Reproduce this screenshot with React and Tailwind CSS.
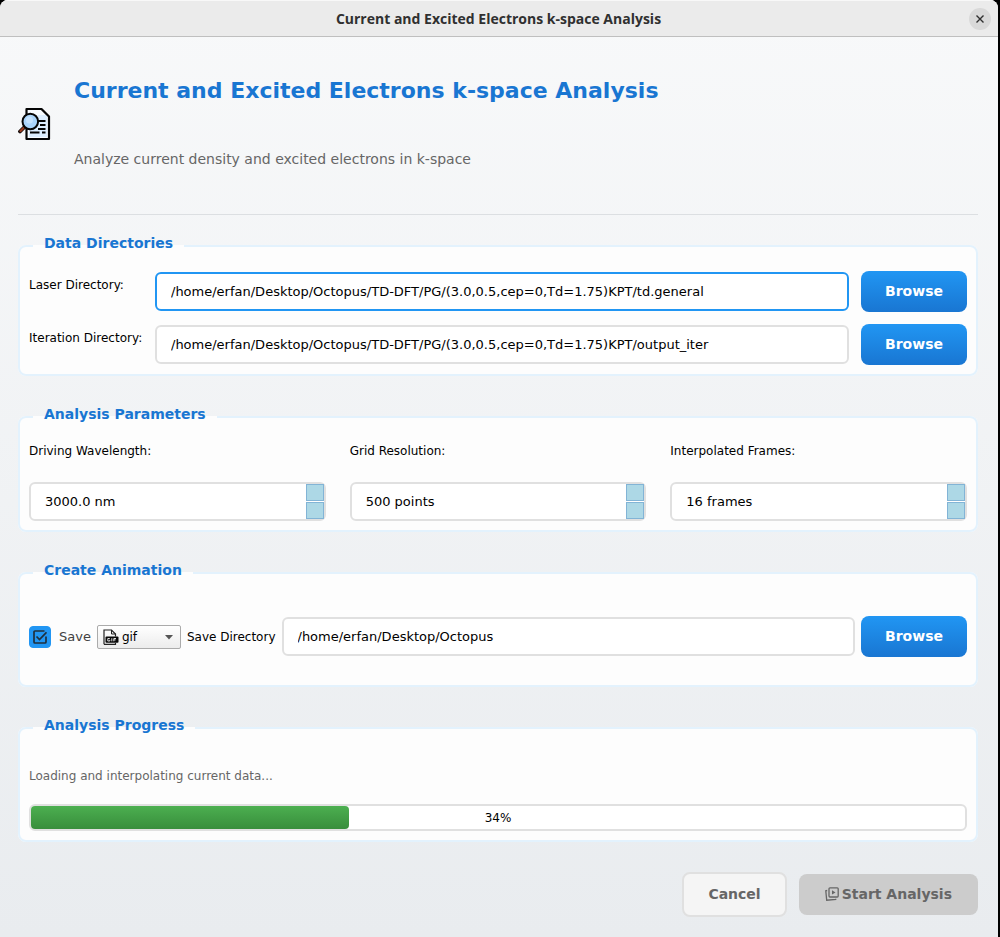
import { useState } from "react";

function DocumentSearchIcon() {
  return (
    <svg width="34" height="34" viewBox="0 0 34 34" fill="none" className="shrink-0" aria-hidden="true">
      <path d="M8.500 2H23.500L31 9.500V32H8.500Z" fill="#f7fbff" />
      <path d="M20 8H29V30H11V17Z" fill="#dceeff" />
      <path d="M8.500 2H23.500L31 9.500V32H8.500Z" stroke="#050505" strokeWidth="2.200" strokeLinejoin="round" />
      <path d="M20 14H27.500M22 18H27.500M20 22H27.500M12 25.500H21.500M24 25.500H27.500" stroke="#050505" strokeWidth="2" />
      <path d="M7 19.500L2 24.500" stroke="#17100e" strokeWidth="3.800" strokeLinecap="round" />
      <path d="M5.500 21L2.500 24" stroke="#9a3a1c" strokeWidth="2.200" strokeLinecap="round" />
      <circle cx="12.300" cy="14.500" r="7.800" fill="#a9d4fb" stroke="#050505" strokeWidth="2" />
      <circle cx="11.500" cy="13" r="3.500" fill="#c4e2fd" />
    </svg>
  );
}

function GifFileIcon() {
  return (
    <svg width="16" height="16" viewBox="0 0 16 16" fill="none" className="pointer-events-none absolute left-1.5 top-1" aria-hidden="true">
      <path d="M1 15.300V1H8.500L12.500 5V7.500M1 15.300H12.500V14" stroke="#222" strokeWidth="1.200" />
      <path d="M8.500 1V5H12.500" stroke="#222" />
      <rect x="2.500" y="7.500" width="13" height="6.300" rx="1" fill="#080808" />
      <path d="M6.800 9.500H4.800V12H6.800V10.800M8.800 9.200V12.300M10.800 12.300V9.500H13M10.800 10.900H12.600" stroke="#f5f5f5" strokeWidth=".9" />
    </svg>
  );
}

function PlayStackIcon() {
  return (
    <svg width="14" height="14" viewBox="0 0 14 14" fill="none" stroke="#666" strokeWidth="1.300" aria-hidden="true">
      <rect x="4" y=".8" width="9.200" height="9.200" rx="1" />
      <path d="M7 3.300L10.500 5.400L7 7.500Z" fill="#666" stroke="none" />
      <path d="M2.200 3.500L.8 3.700L1.700 13.200L10.700 12.500V11.700" />
    </svg>
  );
}

function Group({ title, className, children }) {
  return (
    <fieldset className={`min-w-0 rounded-lg border-2 border-[#e3f2fd] bg-[#fdfdfd] px-[9px] pb-[9px] ${className}`}>
      <legend className="ml-1 px-[11px] pb-1.5 text-sm leading-4 font-bold text-[#1976d2]">{title}</legend>
      {children}
    </fieldset>
  );
}

const FIELD = "h-[39px] w-full min-w-0 rounded-md border-2 bg-white px-3.5 text-[13px] text-black outline-none focus:border-[#2196f3]";

function BrowseButton() {
  return (
    <button type="button" className="h-[41px] rounded-lg bg-linear-to-b from-[#2196f3] to-[#1976d2] px-6 pb-0.5 text-sm font-bold text-white">
      Browse
    </button>
  );
}

function DirectoryRow({ id, label, value, active }) {
  return (
    <div className="flex items-center gap-3">
      <label htmlFor={id} className="mt-1.5 w-[114px] shrink-0 self-start text-xs leading-4 whitespace-nowrap">
        {label}
      </label>
      <input id={id} defaultValue={value} className={`${FIELD} ${active ? "border-[#2196f3]" : "border-[#e0e0e0]"}`} />
      <BrowseButton />
    </div>
  );
}

function SpinBox({ id, label, initial, step, decimals, unit }) {
  const [value, setValue] = useState(initial);
  const stepper = "min-h-0 flex-1 border border-[#82b4d6] bg-[#add8e6]";
  return (
    <div className="flex flex-col gap-[23px]">
      <label htmlFor={id} className="text-xs leading-4">{label}</label>
      <div className="flex h-[39px] rounded-md border-2 border-[#e0e0e0] bg-white">
        <input id={id} readOnly value={`${value.toFixed(decimals)} ${unit}`} className="min-w-0 flex-1 px-3.5 text-[13px] outline-none" />
        <div className="flex w-[18px] flex-col gap-px">
          <button type="button" aria-label={`Increase ${label}`} className={stepper} onClick={() => setValue(value + step)} />
          <button type="button" aria-label={`Decrease ${label}`} className={stepper} onClick={() => setValue(value - step)} />
        </div>
      </div>
    </div>
  );
}

export default function App() {
  const progress = 34;
  return (
    <div className="min-h-screen bg-black pr-0.5 font-['DejaVu_Sans',sans-serif] text-black">
      <div className="flex min-h-screen flex-col overflow-hidden rounded-t-lg bg-linear-to-b from-[#f8f9fa] to-[#e9ecef]">
        <header className="flex h-[37px] items-center border-t border-b border-t-[#f8f8f8] border-b-[#bfbfbf] bg-[#ebebeb] pr-[7px]">
          <div className="w-7" />
          <h2 className="flex-1 text-center font-['Open_Sans',sans-serif] text-sm font-bold text-[#303030]">
            Current and Excited Electrons k-space Analysis
          </h2>
          <button type="button" aria-label="Close" className="flex size-[22px] items-center justify-center rounded-full bg-[#d9d9d9]">
            <svg width="8" height="8" viewBox="0 0 8 8" stroke="#303030" strokeWidth="1.400" aria-hidden="true">
              <path d="M.5.5L7.500 7.500M7.500.5L.5 7.500" />
            </svg>
          </button>
        </header>

        <main className="flex flex-1 flex-col pr-5 pl-[18px]">
          <div className="flex items-center gap-[22px] border-b border-[#dcdfe2] pt-10 pb-[43px]">
            <DocumentSearchIcon />
            <div>
              <h1 className="mb-[42px] text-[22px] leading-7 font-bold text-[#1976d2]">
                Current and Excited Electrons k-space Analysis
              </h1>
              <p className="text-sm leading-6 text-[#666]">Analyze current density and excited electrons in k-space</p>
            </div>
          </div>

          <form className="mt-5 flex flex-col gap-[30px]" onSubmit={(e) => e.preventDefault()}>
            <Group title="Data Directories">
              <div className="flex flex-col gap-3 pt-3.5">
                <DirectoryRow id="laser" label="Laser Directory:" value="/home/erfan/Desktop/Octopus/TD-DFT/PG/(3.0,0.5,cep=0,Td=1.75)KPT/td.general" active />
                <DirectoryRow id="iteration" label="Iteration Directory:" value="/home/erfan/Desktop/Octopus/TD-DFT/PG/(3.0,0.5,cep=0,Td=1.75)KPT/output_iter" />
              </div>
            </Group>

            <Group title="Analysis Parameters">
              <div className="grid grid-cols-3 gap-6 pt-[15px]">
                <SpinBox id="wavelength" label="Driving Wavelength:" initial={3000} step={10} decimals={1} unit="nm" />
                <SpinBox id="grid" label="Grid Resolution:" initial={500} step={10} decimals={0} unit="points" />
                <SpinBox id="frames" label="Interpolated Frames:" initial={16} step={1} decimals={0} unit="frames" />
              </div>
            </Group>

            <Group title="Create Animation">
              <div className="flex items-center gap-1.5 pt-8 pb-[19px]">
                <label className="relative flex items-center gap-2 text-[13px] text-[#424242]">
                  <input type="checkbox" defaultChecked className="peer size-[22px] shrink-0 appearance-none rounded border border-[#90a4ae] checked:border-[#2196f3] checked:bg-[#2196f3]" />
                  <svg width="14" height="14" viewBox="0 0 14 14" fill="none" stroke="#20303c" strokeWidth="1.700" className="pointer-events-none absolute left-1 top-1 hidden peer-checked:block" aria-hidden="true">
                    <path d="M11.500 1H2Q1 1 1 2V12Q1 13 2 13H12Q13 13 13 12V6.500" />
                    <path d="M3.500 6.500L6.500 9.500L13.500 2.300" />
                  </svg>
                  Save
                </label>
                <div className="relative shrink-0">
                  <select aria-label="Animation format" defaultValue="gif" className="block h-6 w-[84px] appearance-none rounded-xs border border-[#ababab] bg-linear-to-b from-white to-[#ececec] pl-6 text-xs">
                    <option>gif</option>
                    <option>mp4</option>
                  </select>
                  <GifFileIcon />
                  <svg width="8" height="5" viewBox="0 0 8 5" className="pointer-events-none absolute top-2.5 right-2" aria-hidden="true">
                    <path d="M0 0H8L4 4.500Z" fill="#555" />
                  </svg>
                </div>
                <label htmlFor="save" className="text-xs whitespace-nowrap">Save Directory</label>
                <input id="save" defaultValue="/home/erfan/Desktop/Octopus" className={`${FIELD} border-[#e0e0e0]`} />
                <BrowseButton />
              </div>
            </Group>

            <Group title="Analysis Progress">
              <div className="pt-[29px]">
                <p id="status" className="mb-5 text-xs leading-4 text-[#666]">Loading and interpolating current data...</p>
                <div role="progressbar" aria-labelledby="status" aria-valuenow={progress} aria-valuemin={0} aria-valuemax={100} className="relative h-[27px] rounded-md border-2 border-[#e0e0e0] bg-white">
                  <div className="h-full rounded bg-linear-to-b from-[#4caf50] to-[#388e3c]" style={{ width: `${progress}%` }} />
                  <span className="absolute inset-0 flex items-center justify-center text-xs">{progress}%</span>
                </div>
              </div>
            </Group>
          </form>

          <footer className="flex items-center justify-end gap-3 pt-[30px] pb-5">
            <button type="button" className="h-[45px] rounded-lg border-2 border-[#e0e0e0] bg-[#f5f5f5] px-6 pb-0.5 text-sm font-bold text-[#666]">
              Cancel
            </button>
            <button type="button" disabled className="flex h-[41px] items-center gap-[3px] rounded-lg bg-[#ccc] px-[26px] pb-0.5 text-sm font-bold text-[#666]">
              <PlayStackIcon />
              Start Analysis
            </button>
          </footer>
        </main>
      </div>
    </div>
  );
}
